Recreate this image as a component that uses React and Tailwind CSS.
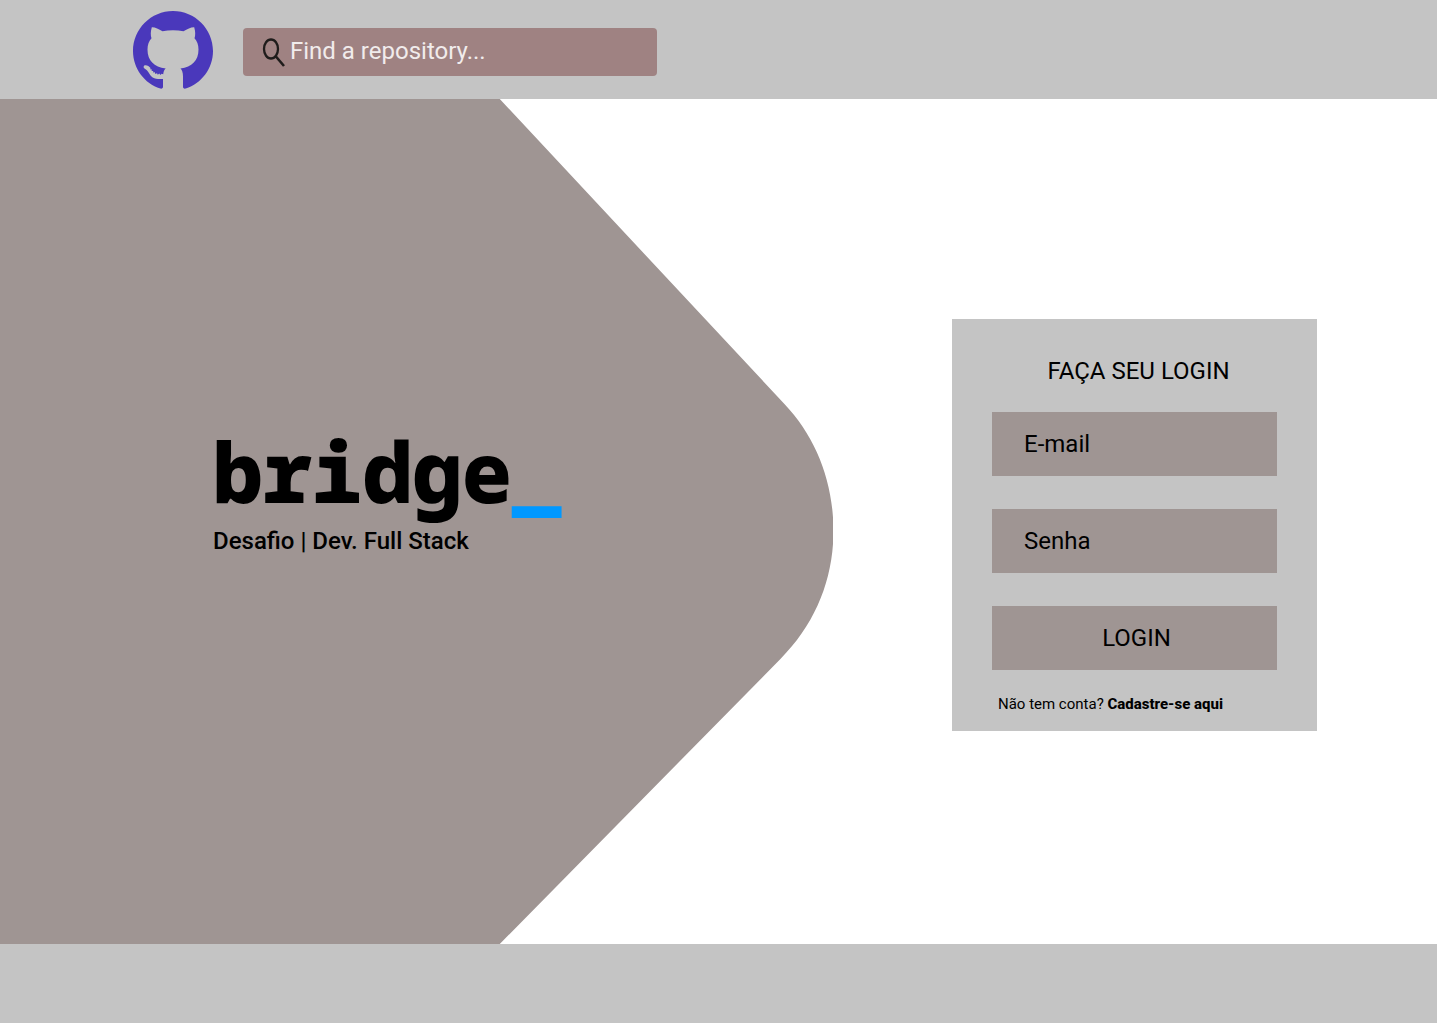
import React from "react";

function GithubMark() {
  return (
    <svg viewBox="0 0 80 80" className="h-20 w-20" role="img" aria-label="GitHub" fill="#4a38bb">
      <path
        fillRule="evenodd"
        d="M40 1C18 1 0 19 0 41C0 58.500 11.500 73.500 27.300 78.600C29.300 79 30 77.800 30 76.700V69C26 69.200 22.500 69.200 19.700 67.500C16.300 65.300 15.800 60.800 11.500 58.500C10 57.300 10.600 55.300 12.500 55.300C14.500 55.300 16.300 56.500 17.500 58L17.200 59.300L18.900 59.600L18.600 61L20.200 61L20.200 62.600L21.900 62.200L22.300 64L24 63.200L24.800 64.800L26.300 63.500L27.400 65L28.600 63.700L30.200 64.300C30.500 61.500 31.300 59.700 32.700 58.500C21 57 14.500 50.500 14.500 39.500C14.500 34.500 16 31 18.500 28.200C17.500 25.500 17.500 21.500 18.800 17.200C22 17 25.500 19 29.500 21.300C36 19.800 44 19.800 50.500 21.300C54.500 19 58 17 61.200 17.200C62.500 21.500 62.500 25.500 61.500 28.200C64 31 65.500 34.500 65.500 39.500C65.500 50.500 59 57 47.500 58.500C49 60 50 62.500 50 66.500V76.700C50 77.800 50.700 79 52.700 78.600C68.500 73.500 80 58.500 80 41C80 19 62 1 40 1Z"
      />
    </svg>
  );
}

function SearchIcon() {
  return (
    <svg viewBox="0 0 24 30" className="h-[30px] w-6 shrink-0" fill="none" stroke="#1f1c1b" strokeWidth="2.300" aria-hidden="true">
      <ellipse cx="9" cy="12" rx="7" ry="9.500" />
      <path d="M13.500 19L22 29" strokeWidth="2.600" />
    </svg>
  );
}

const fieldClass =
  "h-16 w-full bg-[#9f9593] px-8 text-2xl text-black placeholder:text-black placeholder:opacity-100 outline-none focus:ring-2 focus:ring-[#4a38bb]";

export default function App() {
  return (
    <div className="flex min-h-screen flex-col bg-white font-['Roboto',sans-serif] text-black">
      <header className="flex h-[99px] items-center gap-[30px] bg-[#c4c4c4] px-[133px]">
        <a href="#home" className="shrink-0">
          <GithubMark />
        </a>
        <label className="mt-1 flex h-12 w-full max-w-[414px] items-center rounded bg-[#9f8282] pl-[19px]">
          <SearchIcon />
          <input
            type="search"
            aria-label="Find a repository"
            placeholder="Find a repository..."
            className="h-full w-full bg-transparent pb-0.5 pl-1 text-2xl text-[#f1ecec] placeholder:text-[#f1ecec] placeholder:opacity-100 outline-none"
          />
        </label>
      </header>

      <main className="relative flex flex-1 items-center justify-between">
        <svg
          viewBox="0 0 833 845"
          preserveAspectRatio="none"
          className="absolute inset-y-0 left-0 h-full w-[58%]"
          fill="#9f9593"
          aria-hidden="true"
        >
          <path d="M0 0H499.500L784 305C815.500 338 833 383 833 432C833 480 815 525 780 560L499.500 845H0Z" />
        </svg>

        <section className="relative mb-[66px] ml-[213px]">
          <h1 className="mb-1 font-['Noto_Sans_Mono','DejaVu_Sans_Mono',monospace] text-[83px] leading-[100px] font-black">
            bridge<span className="text-[#0098ff]">_</span>
          </h1>
          <p className="text-2xl font-medium">Desafio | Dev. Full Stack</p>
        </section>

        <form
          className="relative mr-[120px] mb-[-7px] w-[365px] bg-[#c4c4c4] px-10 pt-9 pb-[15px]"
          onSubmit={(event) => event.preventDefault()}
        >
          <h2 className="mb-[25px] pl-2 text-center text-2xl">FAÇA SEU LOGIN</h2>
          <div className="flex flex-col gap-[33px]">
            <input type="email" aria-label="E-mail" placeholder="E-mail" className={fieldClass} />
            <input type="password" aria-label="Senha" placeholder="Senha" className={fieldClass} />
            <button type="submit" className="h-16 w-full bg-[#9f9593] pl-1 text-2xl">
              LOGIN
            </button>
          </div>
          <p className="mt-[22px] pl-1.5 text-[15px] leading-6">
            Não tem conta?{" "}
            <a href="#cadastro" className="font-extrabold">
              Cadastre-se aqui
            </a>
          </p>
        </form>
      </main>

      <footer className="h-[79px] bg-[#c4c4c4]" />
    </div>
  );
}
